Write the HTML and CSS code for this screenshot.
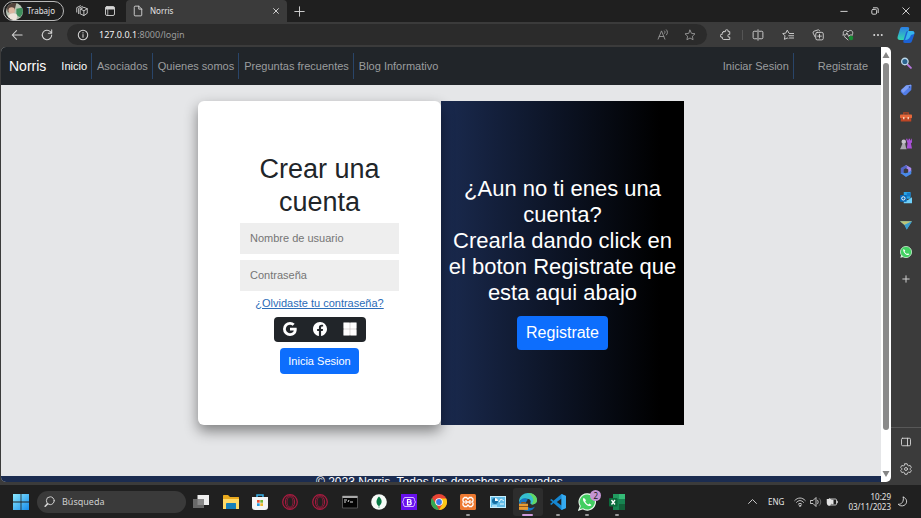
FILE: index.html
```html
<!DOCTYPE html>
<html lang="es">
<head>
<meta charset="utf-8">
<title>Norris</title>
<link rel="stylesheet" href="styles.css">
</head>
<body>
<header class="tabs">
  <button class="profile" type="button">
    <svg class="avatar" viewBox="0 0 18 18" aria-hidden="true"><circle cx="9" cy="9" r="9" fill="#b9c4b5"/><path d="M1 5a9 9 0 0 1 10-5L9 8 2 10z" fill="#53433c"/><circle cx="6" cy="8" r="3.4" fill="#dcb6a0"/><path d="M11 6l6-1a9 9 0 0 1-2 10l-4-2z" fill="#3f8f5c"/><path d="M2 14c2-4 9-4 10-1l-1 5a9 9 0 0 1-9-4z" fill="#efe5dc"/></svg>
    <span>Trabajo</span>
  </button>
  <button class="tab-tool" type="button" aria-label="Espacios"><svg class="i12 line" viewBox="0 0 16 16"><path d="M6 5.500L10.500 3 15 5v6l-4.500 3L6 12zM6 5.500l4.500 2.200L15 5M10.500 7.700V14M3.500 11.500v-7L8.500 2M1 9.500V3.500L6 1"/></svg></button>
  <button class="tab-tool" type="button" aria-label="Pestañas"><svg class="i12 line" viewBox="0 0 16 16"><rect x="2" y="2" width="12" height="12" rx="2"/><path d="M3 3.500h10M3 5h10" stroke-width="2"/><path d="M5 6v8" stroke-width="1"/></svg></button>
  <div class="tab">
    <svg class="i12 line" viewBox="0 0 16 16" aria-hidden="true"><path d="M3 2.500C3 2 3.500 1.500 4 1.500h5l4 4v8c0 .6-.4 1-1 1H4c-.6 0-1-.4-1-1zM9 1.500v4h4"/></svg>
    <span class="tab-title">Norris</span>
    <button class="close" type="button" aria-label="Cerrar pestaña"><svg class="i8 line" viewBox="0 0 10 10"><path d="M2 2l6 6M8 2l-6 6"/></svg></button>
  </div>
  <button class="new-tab" type="button" aria-label="Nueva pestaña"><svg class="i10 line" viewBox="0 0 14 14"><path d="M7 1v12M1 7h12"/></svg></button>
  <div class="window-buttons">
    <button type="button" aria-label="Minimizar"><svg class="i8 line" viewBox="0 0 10 10"><path d="M1 5.500h8"/></svg></button>
    <button type="button" aria-label="Restaurar"><svg class="i8 line" viewBox="0 0 10 10"><rect x="1" y="3" width="6" height="6" rx="1.500"/><path d="M3 1h4.500C8.500 1 9 1.800 9 2.500V7"/></svg></button>
    <button type="button" aria-label="Cerrar"><svg class="i8 line" viewBox="0 0 10 10"><path d="M1 1l8 8M9 1L1 9"/></svg></button>
  </div>
</header>

<div class="toolbar">
  <button class="tool" type="button" aria-label="Atrás"><svg class="i12 line" viewBox="0 0 14 14"><path d="M13 7H1.500M6.500 2l-5 5 5 5"/></svg></button>
  <button class="tool" type="button" aria-label="Actualizar"><svg class="i12 line" viewBox="0 0 14 14"><path d="M12.500 7A5.500 5.500 0 1 1 11 3.200L12.500 5M12.500 1v4h-4"/></svg></button>
  <div class="address">
    <svg class="i12 line" viewBox="0 0 14 14" aria-hidden="true"><circle cx="7" cy="7" r="5.500"/><path d="M7 6.500v3M7 4.200v.4"/></svg>
    <span class="url"><b>127.0.0.1</b>:8000/login</span>
    <button type="button" aria-label="Leer en voz alta"><svg class="i12 line dim" viewBox="0 0 16 16"><path d="M1.500 13.500L6 2.500l4.500 11M3 10h6M10 2.500c1 .8 1 2.700 0 3.500M12.500 1c2 1.800 2 5 0 7"/></svg></button>
    <button type="button" aria-label="Favorito"><svg class="i12 line dim" viewBox="0 0 16 16"><path d="M8 1.500l2 4.300 4.700.6-3.500 3.200.9 4.700L8 12l-4.100 2.300.9-4.700L1.300 6.400 6 5.800z"/></svg></button>
  </div>
  <div class="tools">
    <button class="extension" type="button" aria-label="Extensiones"><svg class="i12 line" viewBox="0 0 16 16"><path d="M5 3.500h2.200a1.900 1.900 0 1 1 3.600 0H13v3.700a1.900 1.900 0 1 0 0 3.600V14H5a2 2 0 0 1-2-2v-1.200a1.900 1.900 0 1 1 0-3.600V5.500a2 2 0 0 1 2-2z"/></svg></button>
    <button class="tool" type="button" aria-label="Dividir pantalla"><svg class="i12 line" viewBox="0 0 16 16"><path d="M6.500 3H3a1.500 1.500 0 0 0-1.500 1.500v7A1.500 1.500 0 0 0 3 13h3.500M9.500 3H13a1.500 1.500 0 0 1 1.500 1.500v7A1.500 1.500 0 0 1 13 13H9.500M8 1v14"/></svg></button>
    <button class="tool" type="button" aria-label="Favoritos"><svg class="i12 line" viewBox="0 0 16 16"><path d="M9 5L7 1.500 5 5.500l-4 .6 3 3-.8 4.700L7 12l1 .5M10 6h5.500M9 9h6.500M10 12h5.500"/></svg></button>
    <button class="tool" type="button" aria-label="Colecciones"><svg class="i12 line" viewBox="0 0 16 16"><path d="M4 10.500L1.500 5.500A2 2 0 0 1 2.500 3L8 1.200c1-.3 2 .2 2.300 1.300"/><rect x="5" y="4.500" width="10" height="10" rx="2"/><path d="M10 7v5M7.500 9.500h5"/></svg></button>
    <button class="tool" type="button" aria-label="Rendimiento"><svg class="i12 line" viewBox="0 0 16 16"><path d="M2 7C0 3 5-.5 8 4c3-4.500 8-1 6 3M1 8h4l1.500-3 2.500 5 1.500-2H14M3 10l5 4.500"/><circle cx="12" cy="12" r="3" fill="#178c34" stroke="none"/></svg></button>
    <button class="tool" type="button" aria-label="Configuración y más"><svg class="i12" viewBox="0 0 16 16" fill="#ddd"><circle cx="3" cy="8" r="1.300"/><circle cx="8" cy="8" r="1.300"/><circle cx="13" cy="8" r="1.300"/></svg></button>
    <button class="copilot" type="button" aria-label="Copilot"><svg class="i18" viewBox="0 0 18 18"><defs><linearGradient id="cp" x2="0" y2="1"><stop stop-color="#2b7ee8"/><stop offset="1" stop-color="#35d8ae"/></linearGradient></defs><path d="M5 1h5.500c1.500 0 2 1 1.600 2.300L9.500 12c-.4 1.400-1 2-2.500 2H3c-2 0-3-1.200-2.300-3.500L3 3c.4-1.300 1-2 2-2z" fill="url(#cp)"/><path d="M11 5h4c2 0 3 1.200 2.300 3.500L15 15c-.4 1.300-1 2-2.500 2H8c-1.500 0-2-1-1.600-2.300L8.800 7C9.200 5.600 9.800 5 11 5z" fill="#1c62d4"/><path d="M11 5h4c2 0 2.700 1.200 2.200 3L14 9c-1 3-3 5-6 5z" fill="#36b5ea"/></svg></button>
  </div>
</div>

<div class="workspace">
  <div class="page">
    <nav class="navbar">
      <a class="brand" href="#">Norris</a>
      <a class="nav-link active" href="#">Inicio</a>
      <a class="nav-link" href="#">Asociados</a>
      <a class="nav-link" href="#">Quienes somos</a>
      <a class="nav-link" href="#">Preguntas frecuentes</a>
      <a class="nav-link" href="#">Blog Informativo</a>
      <a class="nav-link login" href="#">Iniciar Sesion</a>
      <a class="nav-link register" href="#">Registrate</a>
    </nav>
    <main class="content">
      <form class="card sign-in">
        <h1>Crear una cuenta</h1>
        <input type="text" placeholder="Nombre de usuario" aria-label="Nombre de usuario">
        <input type="password" placeholder="Contraseña" aria-label="Contraseña">
        <a class="forgot" href="#">¿Olvidaste tu contraseña?</a>
        <div class="social">
          <button type="button" aria-label="Google"><svg class="i14" viewBox="0 0 16 16" fill="#fff"><path d="M15.545 6.558a9.420 9.420 0 0 1 .139 1.626c0 2.434-.87 4.492-2.384 5.885h.002C11.978 15.292 10.158 16 8 16A8 8 0 1 1 8 0a7.689 7.689 0 0 1 5.352 2.082l-2.284 2.284A4.347 4.347 0 0 0 8 3.166c-2.087 0-3.860 1.408-4.492 3.304a4.792 4.792 0 0 0 0 3.063h.003c.635 1.893 2.405 3.301 4.492 3.301 1.078 0 2.004-.276 2.722-.764h-.003a3.702 3.702 0 0 0 1.599-2.431H8v-3.080h7.545z"/></svg></button>
          <button type="button" aria-label="Facebook"><svg class="i14" viewBox="0 0 16 16" fill="#fff"><path d="M16 8.049c0-4.446-3.582-8.050-8-8.050C3.580 0-.002 3.603-.002 8.050c0 4.017 2.926 7.347 6.750 7.951v-5.625h-2.030V8.050H6.750V6.275c0-2.017 1.195-3.131 3.022-3.131.876 0 1.791.157 1.791.157v1.980h-1.009c-.993 0-1.303.621-1.303 1.258v1.510h2.218l-.354 2.326H9.250V16c3.824-.604 6.750-3.934 6.750-7.951z"/></svg></button>
          <button type="button" aria-label="Microsoft"><svg class="i14" viewBox="0 0 16 16"><path fill="#b9b2b0" d="M1 1h14v14H1z"/><path fill="#fff" d="M.5.5h7.200v7.200H.5zM8.300.5h7.200v7.200H8.300zM.5 8.300h7.200v7.200H.5zM8.300 8.300h7.200v7.200H8.300z"/></svg></button>
        </div>
        <button class="btn" type="submit">Inicia Sesion</button>
      </form>
      <section class="card invite">
        <p>¿Aun no ti enes una cuenta?<br>Crearla dando click en el boton Registrate que esta aqui abajo</p>
        <a class="btn large" href="#">Registrate</a>
      </section>
    </main>
    <footer class="footer">© 2023 Norris. Todos los derechos reservados.</footer>
  </div>
  <div class="scrollbar">
    <svg class="i8" viewBox="0 0 8 8"><path d="M4 1l3.500 6h-7z" fill="#858585"/></svg>
    <div class="thumb"></div>
    <svg class="i8" viewBox="0 0 8 8"><path d="M4 7L.5 1h7z" fill="#858585"/></svg>
  </div>
  <aside class="sidebar">
    <button type="button" aria-label="Buscar"><svg class="i12" viewBox="0 0 16 16"><path d="M9.500 9.500l5 5" stroke="#b878df" stroke-width="2.500" stroke-linecap="round"/><circle cx="6.500" cy="6" r="4.300" fill="#2b638f" stroke="#bcd6e8" stroke-width="1.800"/></svg></button>
    <button type="button" aria-label="Compras"><svg class="i12" viewBox="0 0 16 16"><path d="M8 2l6-1c1 0 1.500.5 1.400 1.500L15 8l-7 6.500c-1 .8-2 .7-3 0L1.500 11c-.8-1-.8-2 0-3z" fill="#527de8"/><path d="M1.500 8L8 2l6-1c1 0 1 .5 1 1L4 12z" fill="#7f9ff5"/><circle cx="12.500" cy="4" r="1" fill="#2f3e73"/></svg></button>
    <button type="button" aria-label="Herramientas"><svg class="i12" viewBox="0 0 16 16"><path d="M5 5V2.500h6V5" fill="none" stroke="#b74422" stroke-width="1.500"/><rect y="4.500" width="16" height="5" rx="1" fill="#e5683b"/><path d="M1 9.500h14V14H1z" fill="#be4625"/><path d="M4 8h2v3H4zM10 8h2v3h-2z" fill="#f4ccb2"/></svg></button>
    <button type="button" aria-label="Juegos"><svg class="i12" viewBox="0 0 16 16"><path d="M8 1h2v2h1.500V1h2v2H15V1h1v5l-1.500 1 1.500 7H9l1-7z" fill="#a950d7"/><circle cx="5" cy="5" r="3" fill="#c7c4cc"/><path d="M3 8h4l1 5 1 2H0l1-2z" fill="#aaa7b0"/></svg></button>
    <button type="button" aria-label="Microsoft 365"><svg class="i12" viewBox="0 0 16 16"><path d="M8 0l7 4v5l-4 2V6L6 3z" fill="#a98bf2"/><path d="M8 0L1 4v8l4-2V6l5-3z" fill="#5366c6"/><path d="M1 11l7 5 7-4V7l-4 3-4 1-3-1z" fill="#498ae9"/></svg></button>
    <button type="button" aria-label="Outlook"><svg class="i12" viewBox="0 0 16 16"><path d="M5 0h9v9H5z" fill="#2aa5e7"/><path d="M5 7l5 4 6-4v8H5z" fill="#6fd0fa"/><path d="M9 1h5v5H9z" fill="#157bca"/><rect y="4" width="9" height="9" rx="1" fill="#0867b5"/><circle cx="4.500" cy="8.500" r="2.200" fill="none" stroke="#fff" stroke-width="1.300"/></svg></button>
    <button type="button" aria-label="Drop"><svg class="i12" viewBox="0 0 16 16"><path d="M0 3h16L9 14 6 8z" fill="#4aaee0"/><path d="M0 3h16L6 8z" fill="#bdc475"/><path d="M6 8l10-5-7 11z" fill="#3a9dcc"/></svg></button>
    <button type="button" aria-label="WhatsApp"><svg class="i12" viewBox="0 0 16 16"><circle cx="8" cy="8" r="7.500" fill="#42d162" stroke="#d7f5dc"/><path d="M.5 15.500l1-4 3 3z" fill="#d7f5dc"/><path d="M5 4c-1.500 1-.5 4 1.500 6s5 3 6 1l-2-1.500-1 1c-1.500-.5-3-2-3.300-3.300L7 6z" fill="#fff"/></svg></button>
    <button type="button" aria-label="Agregar"><svg class="i8 line" viewBox="0 0 10 10"><path d="M5 1v8M1 5h8"/></svg></button>
    <div class="side-bottom">
      <button type="button" aria-label="Barra lateral"><svg class="i12 line" viewBox="0 0 16 16"><rect x="2" y="3" width="12" height="10" rx="1.500"/><path d="M10 3v10"/></svg></button>
      <button type="button" aria-label="Configuración"><svg class="i12 line" viewBox="0 0 16 16"><path d="M6.500 1h3l.6 2 1.500.8 2-.5 1.500 2.600L13.600 7.500v1l1.500 1.600-1.500 2.600-2-.5-1.500.8-.6 2h-3l-.6-2-1.500-.8-2 .5L.9 10.100l1.500-1.600v-1L.9 5.900l1.500-2.600 2 .5L5.900 3z"/><circle cx="8" cy="8" r="2"/></svg></button>
    </div>
  </aside>
</div>

<footer class="taskbar">
  <button class="start" type="button" aria-label="Inicio"><svg class="i16" viewBox="0 0 16 16"><defs><linearGradient id="win" x2="1" y2="1"><stop stop-color="#8be9ff"/><stop offset="1" stop-color="#168bea"/></linearGradient></defs><path d="M0 0h7.600v7.600H0zM8.400 0H16v7.600H8.400zM0 8.400h7.600V16H0zM8.400 8.400H16V16H8.400z" fill="url(#win)"/></svg></button>
  <label class="search">
    <svg class="i10 line" viewBox="0 0 14 14" aria-hidden="true"><circle cx="8" cy="6" r="5"/><path d="M4.500 10L1.500 13" stroke-width="2"/></svg>
    <input type="text" placeholder="Búsqueda" aria-label="Búsqueda">
  </label>
  <div class="apps">
    <button type="button" aria-label="Vista de tareas"><svg class="i16" viewBox="0 0 16 16"><path d="M4.500 1H16v10H4.500z" fill="#eee"/><path d="M0 5h11v9H0z" fill="#777" fill-opacity=".85"/></svg></button>
    <button type="button" aria-label="Explorador"><svg class="i16" viewBox="0 0 16 16"><path d="M0 2c0-1 .4-1 1-1h4l2 2h8c1 0 1 .4 1 1v10H0z" fill="#e9a91d"/><path d="M0 5h16v10H0z" fill="#ffda67"/><path d="M3 10c0-1 .5-1 1-1h8c1 0 1 .5 1 1v5H3z" fill="#1680bc"/></svg></button>
    <button type="button" aria-label="Tienda"><svg class="i16" viewBox="0 0 16 16"><path d="M5 4V1h6v3" fill="none" stroke="#37aee6" stroke-width="1.500"/><path d="M0 3h16v10c0 2-1 3-3 3H3c-2 0-3-1-3-3z" fill="#f4f5f6"/><path d="M5 6h2.700v2.700H5z" fill="#e84d32"/><path d="M8.300 6H11v2.700H8.300z" fill="#72b533"/><path d="M5 9.300h2.700V12H5z" fill="#239be0"/><path d="M8.300 9.300H11V12H8.300z" fill="#efb72c"/></svg></button>
    <button type="button" aria-label="Opera"><svg class="i16" viewBox="0 0 16 16" fill="none" stroke="#a91b40"><circle cx="8" cy="8" r="7.300" stroke-width="1.300"/><ellipse cx="8" cy="8" rx="4.600" ry="6.300" stroke-width="1"/><ellipse cx="8" cy="8" rx="3" ry="5.200" stroke-width=".7"/></svg></button>
    <button type="button" aria-label="Opera GX"><svg class="i16" viewBox="0 0 16 16" fill="none" stroke="#a91b40"><circle cx="8" cy="8" r="7.300" stroke-width="1.300"/><ellipse cx="8" cy="8" rx="4.600" ry="6.300" stroke-width="1"/><ellipse cx="8" cy="8" rx="3" ry="5.200" stroke-width=".7"/></svg></button>
    <button type="button" aria-label="Terminal"><svg class="i16" viewBox="0 0 16 16"><path d="M.5 2h15v12H.5z" fill="#050505" stroke="#555"/><path d="M.5 2h15v2H.5z" fill="#aaa"/><path d="M2 6h3M2 8h2M6 8l1-2M8 8h3" stroke="#ddd"/></svg></button>
    <button type="button" aria-label="MongoDB"><svg class="i16" viewBox="0 0 16 16"><circle cx="8" cy="8" r="7.800" fill="#f5faf7"/><path d="M8 2.500c4 4 3 7 .3 9.500V14h-.6v-2C5 10 4.500 6 8 2.500z" fill="#087b45"/></svg></button>
    <button type="button" aria-label="Bootstrap"><svg class="i16" viewBox="0 0 16 16"><path d="M0 0h16v16H0z" fill="#6810ed"/><path d="M4 3.500c-2 0-1 3.500-2.500 4.500C3 9 2 12.500 4 12.500h8c2 0 1-3.500 2.500-4.500C13 7 14 3.500 12 3.500z" fill="none" stroke="#d7bbff"/><path d="M6.500 5.500h2c2 0 2 2.500 0 2.500h-2zM6.500 8h2.300c2 0 2 2.800-.3 2.800h-2z" fill="none" stroke="#fff" stroke-width="1.200"/></svg></button>
    <button type="button" aria-label="Chrome"><svg class="i16" viewBox="0 0 16 16"><circle cx="8" cy="8" r="8" fill="#e94435"/><path d="M1 4l4 6 3 6A8 8 0 0 1 1 4z" fill="#34a853"/><path d="M8 4.500h7.200A8 8 0 0 1 8 16l3.500-6z" fill="#fbc817"/><circle cx="8" cy="8" r="3.800" fill="#fff"/><circle cx="8" cy="8" r="2.900" fill="#3b78e7"/></svg></button>
    <button class="running" type="button" aria-label="XAMPP"><svg class="i16" viewBox="0 0 16 16"><rect width="16" height="16" rx="1.500" fill="#ed7930"/><path d="M4.500 3.500h2L8 5l1.500-1.500h2L13 5v2l-1.200 1L13 9v2l-1.500 1.500h-2L8 11l-1.500 1.500h-2L3 11V9l1.200-1L3 7V5zM6 6v4M10 6v4M6 8h4" fill="none" stroke="#fff" stroke-width="1.300"/></svg></button>
    <button type="button" aria-label="Panel de control"><svg class="i16" viewBox="0 0 16 16"><path d="M0 2h16v12H0z" fill="#c5efff"/><path d="M1 3h14v10H1z" fill="#63bde8"/><circle cx="5" cy="7" r="3" fill="#136ca1"/><path d="M5 4v3h3a3 3 0 0 0-3-3z" fill="#fff"/><path d="M9 8l2-3 3 2M10 10h4M2 12h5" stroke="#e9f8ff" fill="none"/></svg></button>
    <button class="running current" type="button" aria-label="Edge"><svg class="i18" viewBox="0 0 16 16"><path d="M0 9C-.5 3 4 0 8 0c5 0 8 3 8 6.500 0 4-5 4.500-6 2.500 1-2 0-4-3-4C3 5 1 6 0 9z" fill="#36bfd0"/><path d="M8 0c5 0 8 3 8 6.500 0 3-3 4-5 3.500 3-3 2-7-3-10z" fill="#64d761"/><path d="M0 9c1-4 5-6 8-3-3 2-2 6 1 7 2 .7 4 0 5-1-1 3-4 4-6 4-4 0-8-2-8-7z" fill="#1474c6"/><path d="M0 9.500h8V15H0z" fill="#e89a32"/><path d="M0 12h8M2.500 9.500v-1h3v1" stroke="#8c541b" fill="none"/></svg></button>
    <button class="running" type="button" aria-label="Visual Studio Code"><svg class="i16" viewBox="0 0 16 16"><path d="M11.500 0L16 2v12l-4.500 2L3.500 9 1.500 11 0 10l2.500-2L0 6l1.500-1 2 1.800z" fill="#1587d2"/><path d="M11.500 4.500L6.800 8l4.700 3.500z" fill="#202020"/><path d="M11.500 0L16 2v12l-4.500 2z" fill="#35aaf0"/></svg></button>
    <button class="running" type="button" aria-label="WhatsApp"><svg class="i18" viewBox="0 0 16 16"><path d="M8 .8A7.200 7.200 0 1 1 4.300 14L.7 15.200 2 11.700A7.200 7.200 0 0 1 8 .8z" fill="#42ce61" stroke="#eafbed"/><path d="M5.200 4.300c-1.500 1-.5 3.500 1.300 5.200 1.800 1.800 4.500 3 5.500 1.200L10.200 9.300l-1 1C8 9.800 6.800 8.500 6.400 7.400l.8-1z" fill="#fff"/></svg><span class="badge">2</span></button>
    <button class="running" type="button" aria-label="Excel"><svg class="i16" viewBox="0 0 16 16"><path d="M4 0h12v16H4z" fill="#178451"/><path d="M10 0h6v5h-6z" fill="#35bb77"/><path d="M4 0h6v5H4z" fill="#219b60"/><path d="M10 10h6v6h-6z" fill="#126139"/><rect y="4" width="8.500" height="8.500" rx=".8" fill="#0b6b3b"/><path d="M2.500 6l3.500 4.500M6 6l-3.500 4.500" stroke="#fff" stroke-width="1.300"/></svg></button>
  </div>
  <div class="tray">
    <svg class="i10 line" viewBox="0 0 14 14"><path d="M2 9.500l5-5 5 5"/></svg>
    <span class="lang">ENG</span>
    <div class="status">
      <svg class="i12 line" viewBox="0 0 16 16"><path d="M1 6c4-4.500 10-4.500 14 0M3.300 8.500c3-3.300 6.400-3.300 9.400 0M5.600 11c1.600-1.700 3.200-1.700 4.800 0"/><circle cx="8" cy="13" r="1"/></svg>
      <svg class="i12 line" viewBox="0 0 16 16"><path d="M1 6h3l4-4v12L4 10H1zM10 5.500c1.300 1.500 1.300 3.500 0 5"/><path d="M12.500 3.500c2.500 2.500 2.500 6.500 0 9" stroke="#777"/></svg>
      <svg class="i12 line" viewBox="0 0 16 16"><rect x="3" y="4" width="11" height="8" rx="1.500"/><path d="M15.500 7v2"/><path d="M1 4h6v5c0 2-1 4-3 4s-3-2-3-4zM7 5h3v6H7z" fill="#e3e3e3" stroke="none"/></svg>
    </div>
    <div class="clock"><span>10:29</span><span>03/11/2023</span></div>
    <svg class="i10 line" viewBox="0 0 14 14"><path d="M8 1.500c5 1 6 8 1 10.500-3 1.300-6 .3-7.500-1.500C6 11 9 7 8 1.500z"/></svg>
  </div>
</footer>
</body>
</html>
```
FILE: styles.css
```css
* { box-sizing: border-box; }

body {
  margin: 0;
  height: 100vh;
  display: flex;
  flex-direction: column;
  overflow: hidden;
  background: #3b3b3b;
  color: #e6e6e6;
  font: 9px/12px "Noto Sans", "Open Sans", sans-serif;
}

button {
  display: flex;
  align-items: center;
  justify-content: center;
  padding: 0;
  border: 0;
  background: none;
  color: inherit;
  font: inherit;
}

svg { display: block; flex: none; }
.i8 { width: 8px; height: 8px; }
.i10 { width: 11px; height: 11px; }
.i12 { width: 12px; height: 12px; }
.i14 { width: 14px; height: 14px; }
.i16 { width: 16px; height: 16px; }
.i18 { width: 18px; height: 18px; }
.line { fill: none; stroke: #d6d6d6; stroke-width: 1.200; stroke-linecap: round; stroke-linejoin: round; }
.dim { stroke: #989898; }

/* Browser tabs */
.tabs { display: flex; align-items: center; height: 22px; flex: none; background: #1f1f1f; }
.profile {
  width: 61px;
  height: 20px;
  margin: 0 4px 0 3px;
  padding-right: 6px;
  gap: 4px;
  border: 1px solid #b9b9b9;
  border-radius: 10px;
  font-size: 8px;
}
.avatar { width: 17px; height: 17px; }
.tab-tool { width: 28px; height: 22px; }
.tab {
  display: flex;
  align-items: center;
  width: 161px;
  height: 22px;
  margin-left: 2px;
  padding: 0 6px;
  gap: 6px;
  background: #3b3b3b;
  border-radius: 4px 4px 0 0;
  font-size: 8px;
}
.close { margin-left: auto; width: 10px; height: 10px; }
.new-tab { width: 24px; height: 22px; }
.window-buttons { display: flex; margin-left: auto; }
.window-buttons button { width: 31px; height: 22px; }

/* Browser toolbar */
.toolbar { display: flex; align-items: center; height: 25px; flex: none; padding-left: 2px; }
.tool { width: 30px; height: 20px; }
.address {
  display: flex;
  align-items: center;
  flex: 1;
  height: 21px;
  margin-left: 5px;
  padding: 0 10px;
  background: #2b2b2b;
  border-radius: 11px;
}
.url { flex: 1; margin-left: 10px; color: #9c9c9c; }
.url b { color: #f2f2f2; font-weight: 400; }
.address button { width: 14px; margin-left: 13px; }
.tools { display: flex; align-items: center; }
.extension { width: 29px; height: 10px; margin-left: 7px; padding-right: 4px; border-right: 1px solid #555; }
.copilot { width: 28px; padding-right: 2px; }

/* Web page */
.workspace { display: flex; flex: 1; min-height: 0; padding: 0 0 3px 1px; }
.page {
  flex: 1;
  min-width: 0;
  overflow: hidden;
  background: #e5e6e8;
  border-radius: 5px 0 0 5px;
  color: #212529;
  font: 11px/16px "Liberation Sans", Arial, sans-serif;
}
.navbar { display: flex; align-items: center; height: 38px; padding: 0 8px; background: #212529; }
.navbar a { text-decoration: none; }
.brand { margin-right: 9px; color: #fff; font-size: 14px; }
.nav-link { padding: 5px 4px 5px 5px; border-left: 1px solid #294569; color: #9b9d9f; }
.nav-link.active { border-color: transparent; color: #fff; }
.nav-link.login { margin-left: auto; border-color: transparent; }
.nav-link.register { padding: 5px 5px 5px 24px; }

.content {
  position: relative;
  z-index: 0;
  display: grid;
  grid-template-columns: 243px 243px;
  justify-content: center;
  padding: 16px 0 51px;
}
.card {
  display: flex;
  flex-direction: column;
  align-items: center;
  justify-content: center;
  min-height: 324px;
  text-align: center;
}
.sign-in {
  padding: 0 42px;
  gap: 6px;
  background: #fff;
  border-radius: 6px;
  box-shadow: 0 6px 14px rgba(0, 0, 0, .45);
}
.sign-in h1 { margin: 0 0 -2px; font-size: 27px; line-height: 33px; font-weight: 400; }
.sign-in input {
  width: 100%;
  height: 31px;
  padding: 0 10px;
  border: 0;
  background: #eee;
  font: inherit;
}
.sign-in input::placeholder { color: #757575; }
.forgot { margin: -2px 0 0; color: #2b6cb8; text-decoration: underline; }
.social { display: flex; padding: 0 1px; background: #212529; border-radius: 4px; }
.social button { width: 30px; height: 25px; }
.btn {
  padding: 5px 8px;
  background: #0d6efd;
  border-radius: 4px;
  color: #fff;
  line-height: 16px;
  text-decoration: none;
}
.invite {
  position: relative;
  z-index: -1;
  padding: 0 6px;
  gap: 10px;
  background: linear-gradient(90deg, #1a2a4f, #000 90%);
  color: #fff;
}
.invite p { margin: 0; font-size: 22px; line-height: 26px; }
.btn.large { padding: 9px; font-size: 16px; }
.footer { background: #1b2c50; color: #fff; font-size: 12px; line-height: 12px; text-align: center; }

.scrollbar {
  display: flex;
  flex-direction: column;
  align-items: center;
  width: 10px;
  padding: 4px 0;
  gap: 4px;
  background: #fff;
  border-radius: 0 5px 5px 0;
}
.thumb { width: 6px; flex: 1; margin-bottom: 36px; background: #8a8a8a; border-radius: 3px; }

.sidebar { display: flex; flex-direction: column; width: 30px; padding-top: 2px; }
.sidebar button { width: 30px; height: 27px; }
.side-bottom { margin-top: auto; border-top: 1px solid #585858; }

/* Taskbar */
.taskbar { display: flex; align-items: center; height: 33px; flex: none; background: #202020; }
.start { width: 25px; height: 24px; margin: 0 4px 0 8px; }
.search {
  display: flex;
  align-items: center;
  width: 149px;
  height: 22px;
  padding: 0 7px;
  gap: 7px;
  background: #3a3a3a;
  border-radius: 11px;
}
.search input { flex: 1; min-width: 0; padding: 0; border: 0; background: none; font: inherit; }
.search input::placeholder { color: #cfcfcf; }
.apps { display: flex; width: 446px; }
.apps button { position: relative; flex: 1; height: 28px; }
.apps .running::after {
  content: "";
  position: absolute;
  bottom: 0;
  width: 4px;
  height: 2px;
  border-radius: 1px;
  background: #9a9a9a;
}
.apps .current { background: #2d2d2d; border-radius: 3px; }
.apps .current::after { width: 11px; background: #cf9bdc; }
.badge {
  position: absolute;
  top: 2px;
  right: 1px;
  width: 11px;
  height: 11px;
  border-radius: 6px;
  background: #c594d3;
  color: #222;
  font-size: 8px;
  line-height: 11px;
}
.tray { display: flex; align-items: center; gap: 10px; margin-left: auto; padding-right: 13px; font-size: 8px; }
.status { display: flex; gap: 4px; }
.clock { display: flex; flex-direction: column; text-align: right; line-height: 10px; }
.tray > svg:last-child { margin-left: -4px; }
```
